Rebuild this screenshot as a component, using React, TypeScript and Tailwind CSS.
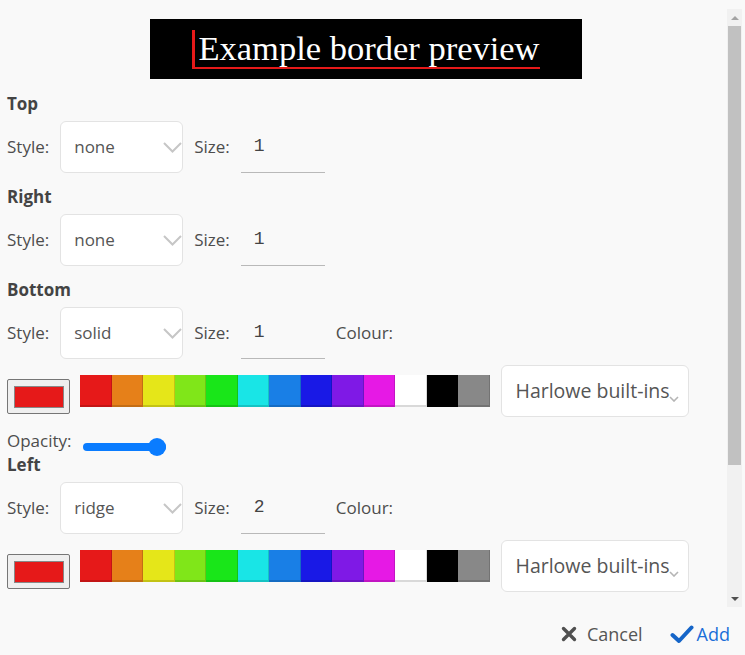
import React from 'react';

const palette = [
  '#e61919', '#e68019', '#e5e619', '#80e619', '#19e619', '#19e5e6', '#197fe6',
  '#1919e6', '#7f19e6', '#e619e5', '#ffffff', '#000000', '#888888',
];

const Chevron = ({ small }: { small?: boolean }) =>
  small ? (
    <svg width="10" height="6" viewBox="0 0 10 6" className="absolute right-[9px] top-[30px]">
      <path d="M1 1 L5 5 L9 1" fill="none" stroke="#b5b5b5" strokeWidth="1.6" />
    </svg>
  ) : (
    <svg width="19" height="11" viewBox="0 0 19 11" className="absolute right-0 top-[20px]">
      <path d="M1 1 L9.5 9.5 L18 1" fill="none" stroke="#c6c6c6" strokeWidth="2" />
    </svg>
  );

const StyleSelect = ({ value }: { value: string }) => (
  <div className="relative w-[123px] h-[52px] bg-white border border-[#e3e3e3] rounded-[6px] flex items-center pl-[13px] text-[#555]">
    {value}
    <Chevron />
  </div>
);

const SizeInput = ({ value }: { value: string }) => (
  <div className="w-[84px] h-[52px] border-b border-[#b9b9b9] flex items-center pl-[13px] text-[18px] text-[#444] font-['Liberation_Mono',monospace]">
    {value}
  </div>
);

const StyleRow = ({ style, size, colour }: { style: string; size: string; colour?: boolean }) => (
  <div className="mt-[5px] h-[52px] flex items-center gap-[11px]">
    <span>Style:</span>
    <StyleSelect value={style} />
    <span>Size:</span>
    <SizeInput value={size} />
    {colour && <span>Colour:</span>}
  </div>
);

const ColourRow = () => (
  <div className="mt-[6px] h-[52px] flex items-center">
    <div className="w-[63px] h-[35px] mt-[11px] bg-[#efefef] border border-[#767676] rounded-[2px] flex items-center justify-center">
      <div className="w-[50px] h-[22px] bg-[#e61919] border border-[#888]" />
    </div>
    <div className="ml-[10px] flex">
      {palette.map((c) => (
        <div
          key={c}
          className="w-[31.5px] h-[32px] shadow-[inset_-1px_-2px_0_rgba(0,0,0,0.15)]"
          style={{ backgroundColor: c }}
        />
      ))}
    </div>
    <div className="relative ml-[11px] w-[188px] h-[52px] bg-white border border-[#e3e3e3] rounded-[6px] flex items-center pl-[14px] text-[19.5px] text-[#555] overflow-hidden whitespace-nowrap">
      Harlowe built-ins
      <Chevron small />
    </div>
  </div>
);

const Label = ({ children, first }: { children: React.ReactNode; first?: boolean }) => (
  <div className={`${first ? 'mt-[13px]' : 'mt-3'} h-6 leading-6 font-bold text-[#444]`}>{children}</div>
);

export default function App() {
  return (
    <div className="w-[745px] h-[655px] bg-[#f9f9f9] flex flex-col font-['Open_Sans',sans-serif] text-[17px] text-[#4d4d4d] overflow-hidden">
      <div className="h-[607px] flex">
        <div className="flex-1 pl-[7px] pt-[19px] overflow-hidden">
          {/* preview */}
          <div className="ml-[143px] w-[432px] h-[60px] bg-black flex items-center justify-center">
            <span className="font-['Liberation_Serif',serif] text-[34.5px] leading-[37px] text-white border-l-[3px] border-b-2 border-[#e61919] pl-[3px]">
              Example border preview
            </span>
          </div>

          <Label first>Top</Label>
          <StyleRow style="none" size="1" />

          <Label>Right</Label>
          <StyleRow style="none" size="1" />

          <Label>Bottom</Label>
          <StyleRow style="solid" size="1" colour />
          <ColourRow />
          <div className="mt-3 h-6 flex items-center gap-[11px]">
            <span>Opacity:</span>
            <div className="relative mt-[11px] w-[83px] h-[8px] rounded-full bg-[#0a7cff]">
              <div className="absolute right-0 top-[-5px] w-[18px] h-[18px] rounded-full bg-[#0a7cff]" />
            </div>
          </div>

          <div className="h-6 leading-6 font-bold text-[#444]">Left</div>
          <StyleRow style="ridge" size="2" colour />
          <ColourRow />
        </div>

        {/* scrollbar */}
        <div className="w-[15px] mr-[3px] mt-[9px] bg-[#f1f1f1] flex flex-col items-center">
          <div className="h-[17px] flex items-center justify-center">
            <div className="w-0 h-0 border-l-[4px] border-r-[4px] border-b-[4px] border-l-transparent border-r-transparent border-b-[#a3a3a3]" />
          </div>
          <div className="w-[13px] h-[439px] bg-[#c1c1c1]" />
          <div className="flex-1" />
          <div className="h-[17px] flex items-center justify-center">
            <div className="w-0 h-0 border-l-[4px] border-r-[4px] border-t-[4px] border-l-transparent border-r-transparent border-t-[#505050]" />
          </div>
        </div>
      </div>

      {/* footer */}
      <div className="flex-1 pt-[6px] flex items-center justify-end pr-[15px] text-[18px]">
        <div className="flex items-center text-[#555]">
          <svg width="16" height="16" viewBox="0 0 16 16">
            <path d="M2.5 2.5 L13.5 13.5 M13.5 2.5 L2.5 13.5" stroke="#505050" strokeWidth="3.4" strokeLinecap="round" />
          </svg>
          <span className="ml-[10px]">Cancel</span>
        </div>
        <div className="ml-[27px] flex items-center text-[#1a6ed8]">
          <svg width="24" height="19" viewBox="0 0 24 19">
            <path d="M2.5 10 L9 16 L21.5 2.5" fill="none" stroke="#1565c8" strokeWidth="4" strokeLinecap="round" strokeLinejoin="round" />
          </svg>
          <span className="ml-[3px]">Add</span>
        </div>
      </div>
    </div>
  );
}
